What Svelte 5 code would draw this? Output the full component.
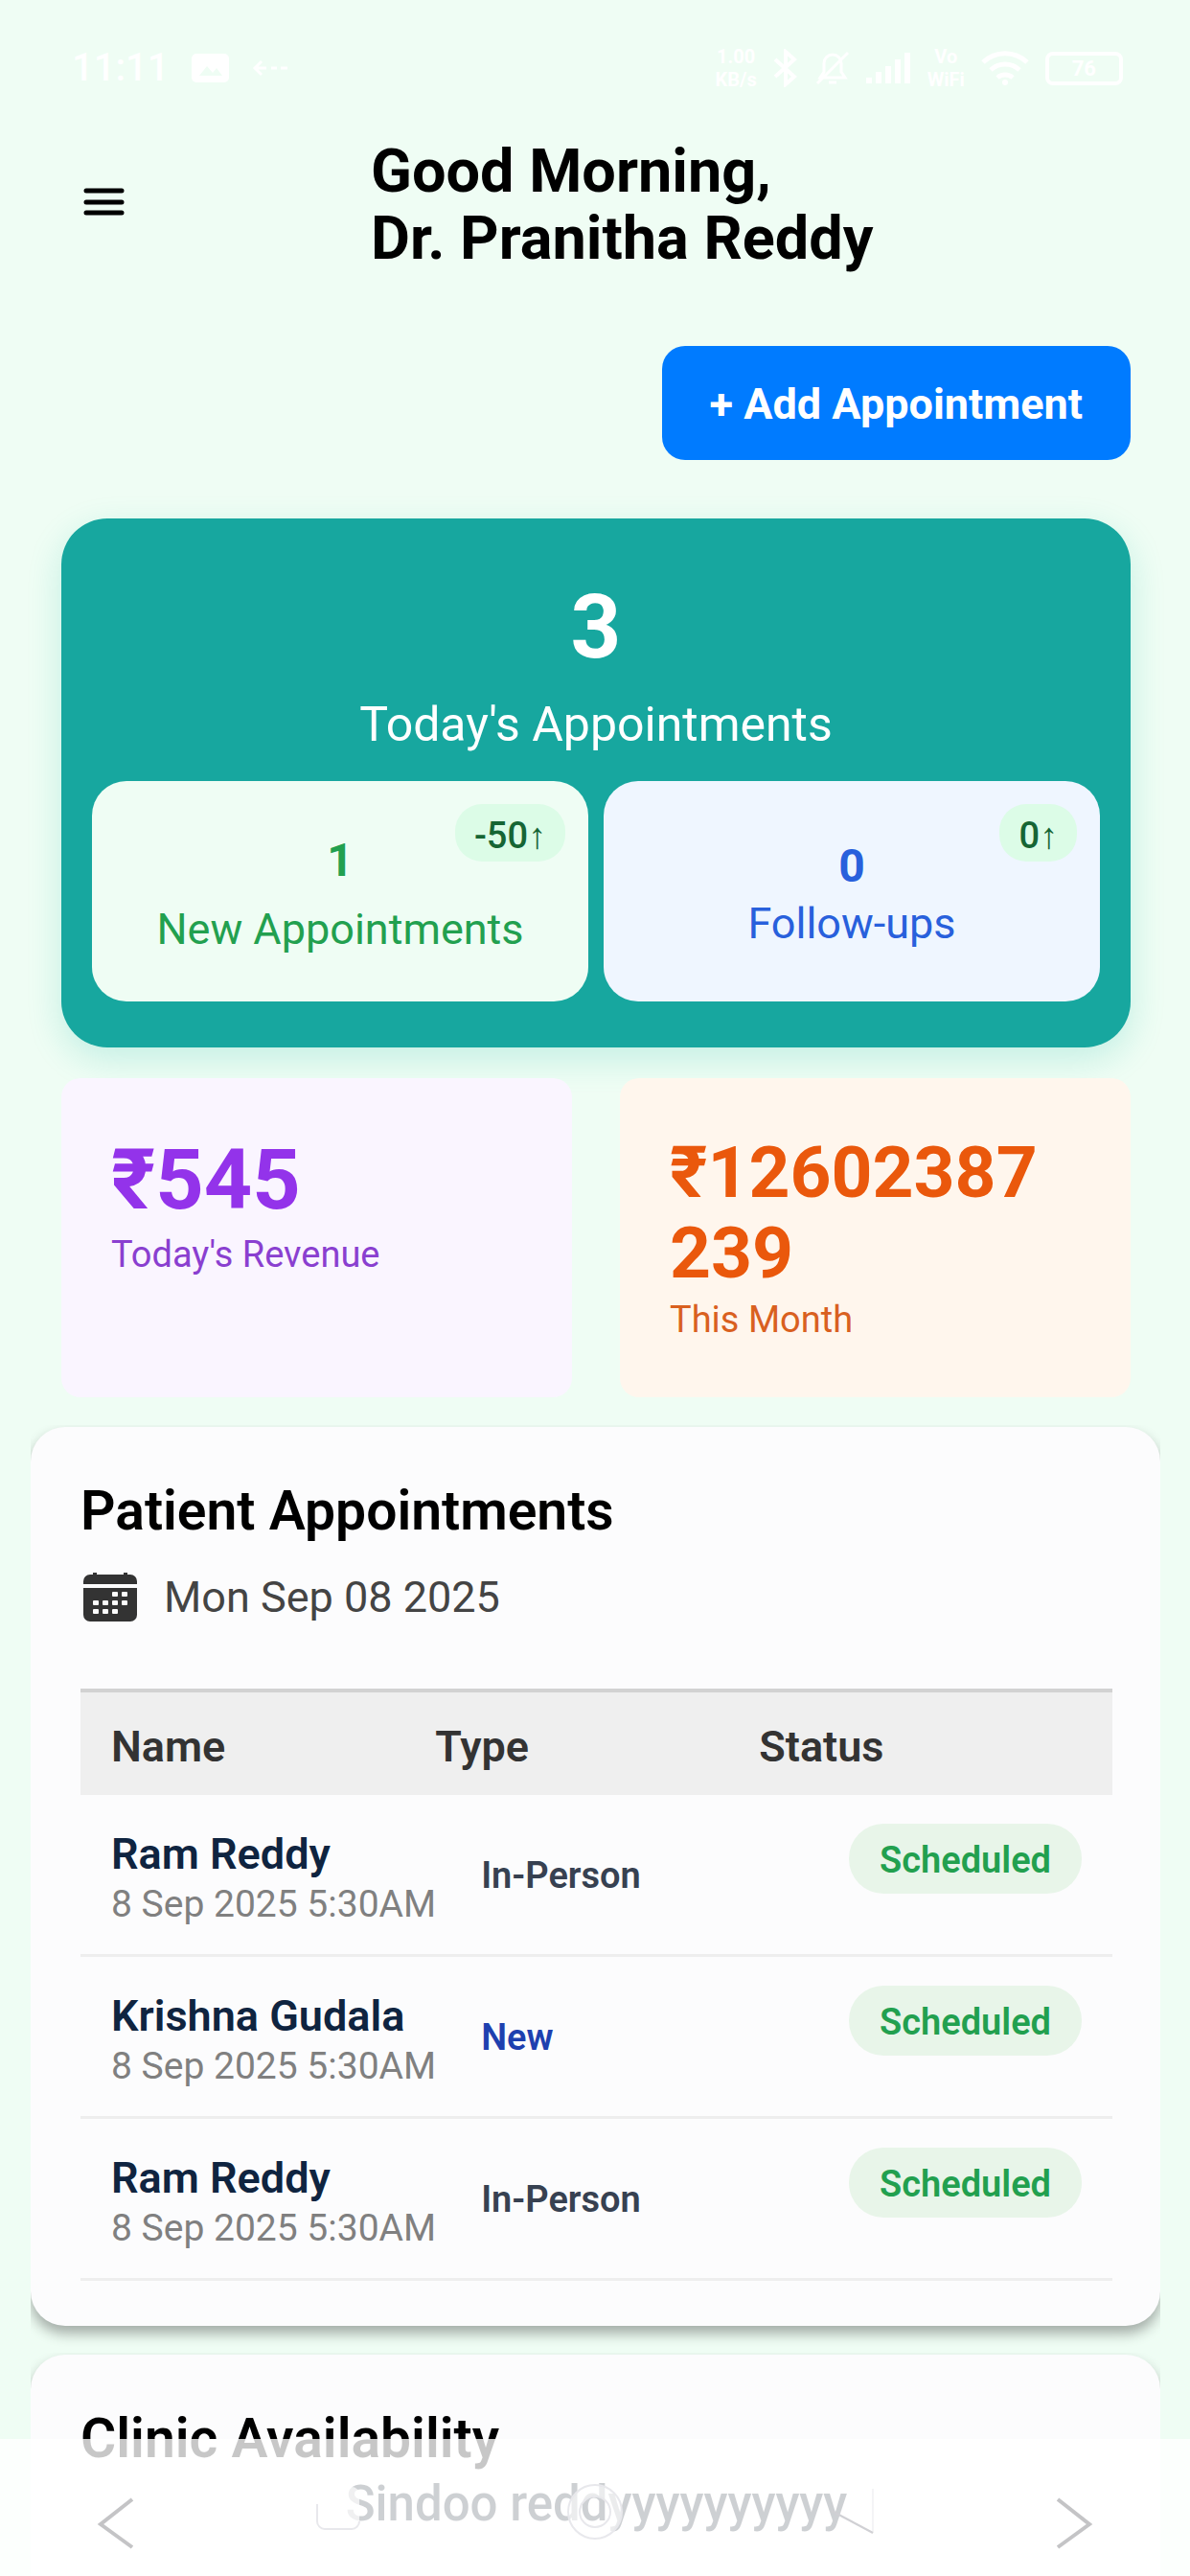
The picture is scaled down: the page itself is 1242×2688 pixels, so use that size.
<script lang="ts">
  type Appointment = {
    name: string;
    time: string;
    type: string;
    status: string;
  };

  const doctor = 'Dr. Pranitha Reddy';
  const today = 'Mon Sep 08 2025';

  const stats = [
    { id: 'new', value: 1, label: 'New Appointments', change: '-50' },
    { id: 'follow', value: 0, label: 'Follow-ups', change: '0' },
  ];

  const appointments: Appointment[] = [
    { name: 'Ram Reddy', time: '8 Sep 2025 5:30AM', type: 'In-Person', status: 'Scheduled' },
    { name: 'Krishna Gudala', time: '8 Sep 2025 5:30AM', type: 'New', status: 'Scheduled' },
    { name: 'Ram Reddy', time: '8 Sep 2025 5:30AM', type: 'In-Person', status: 'Scheduled' },
  ];

  const calendarDots = [
    [30, 20], [40, 20],
    [10, 29], [20, 29], [30, 29], [40, 29],
    [10, 38], [20, 38], [30, 38],
  ];
</script>

<div class="screen">
  <div class="status-bar">
    <div class="status-left">
      <span class="clock">11:11</span>
      <svg width="39" height="30" viewBox="0 0 39 30" aria-hidden="true">
        <rect width="39" height="30" rx="5" fill="#fff" />
        <path d="M8 23l8-10 6 7 4-5 6 8z" fill="#effdf4" />
      </svg>
      <svg width="40" height="18" viewBox="0 0 40 18" fill="none" stroke="#fff" stroke-width="3" aria-hidden="true">
        <path d="M10 2L3 9l7 7M3 9h12M20 9h6M30 9h7" />
      </svg>
    </div>
    <div class="status-right">
      <div class="tiny"><span>1.00</span><span>KB/s</span></div>
      <svg width="28" height="40" viewBox="0 0 28 40" fill="none" stroke="#fff" stroke-width="4" aria-hidden="true">
        <path d="M3 11l20 18-9 8V3l9 8L3 29" />
      </svg>
      <svg width="38" height="38" viewBox="0 0 38 38" fill="none" stroke="#fff" stroke-width="3" aria-hidden="true">
        <path d="M6 29h26l-4-6v-9a9 9 0 0 0-18 0v9zM15 34h8M3 35L35 3" />
      </svg>
      <svg width="48" height="32" viewBox="0 0 48 32" fill="#fff" aria-hidden="true">
        <path d="M0 26h6v6H0zM10 20h6v12h-6zM20 14h6v18h-6zM30 7h6v25h-6zM40 0h6v32h-6z" />
      </svg>
      <div class="tiny"><span>Vo</span><span>WiFi</span></div>
      <svg width="52" height="38" viewBox="0 0 52 38" fill="none" stroke="#fff" stroke-width="5" aria-hidden="true">
        <path d="M3 13a33 33 0 0 1 46 0M11 21a22 22 0 0 1 30 0M18 29a12 12 0 0 1 16 0" />
        <circle cx="26" cy="34" r="3" fill="#fff" stroke="none" />
      </svg>
      <span class="battery">76</span>
    </div>
  </div>

  <header>
    <button type="button" class="menu" aria-label="Open menu">
      <svg width="43" height="40" viewBox="0 0 43 40" aria-hidden="true">
        <path d="M3 5h37M3 17h37M3 28h37" stroke="#000" stroke-width="5" stroke-linecap="round" />
      </svg>
    </button>
    <h1>Good Morning,<br />{doctor}</h1>
  </header>

  <div class="actions">
    <button type="button" class="add">+ Add Appointment</button>
  </div>

  <section class="summary">
    <p class="total">3</p>
    <p class="total-label">Today's Appointments</p>
    <div class="stats">
      {#each stats as stat (stat.id)}
        <div class="stat {stat.id}">
          <span class="stat-value">{stat.value}</span>
          <span class="stat-label">{stat.label}</span>
          <span class="change">{stat.change}↑</span>
        </div>
      {/each}
    </div>
  </section>

  <section class="revenue">
    <div class="revenue-card day">
      <p class="amount">₹545</p>
      <p class="caption">Today's Revenue</p>
    </div>
    <div class="revenue-card month">
      <p class="amount">₹12602387239</p>
      <p class="caption">This Month</p>
    </div>
  </section>

  <section class="card">
    <h2>Patient Appointments</h2>
    <button type="button" class="date">
      <svg width="56" height="52" viewBox="0 0 56 52" fill="#333" aria-hidden="true">
        <path d="M0 12V9a7 7 0 0 1 7-7h3V0h4v2h28V0h4v2h3a7 7 0 0 1 7 7v3z" />
        <path d="M0 16h56v28a7 7 0 0 1-7 7H7a7 7 0 0 1-7-7z" />
        {#each calendarDots as [x, y]}
          <rect {x} {y} width="6" height="5" rx="1" fill="#fcfcfc" />
        {/each}
      </svg>
      {today}
    </button>

    <table>
      <thead>
        <tr>
          <th class="col-name">Name</th>
          <th class="col-type">Type</th>
          <th>Status</th>
        </tr>
      </thead>
      <tbody>
        {#each appointments as item}
          <tr>
            <td class="col-name">
              <div class="name">{item.name}</div>
              <div class="time">{item.time}</div>
            </td>
            <td class="type" class:is-new={item.type === 'New'}>{item.type}</td>
            <td class="status"><span class="pill">{item.status}</span></td>
          </tr>
        {/each}
      </tbody>
    </table>
  </section>

  <section class="card clinic">
    <h2>Clinic Availability</h2>
    <p class="clinic-name">Sindoo reddyyyyyyyyyy</p>
  </section>

  <nav aria-label="Page">
    <button type="button" aria-label="Previous">
      <svg width="40" height="54" viewBox="0 0 40 54" aria-hidden="true">
        <path d="M37 2L4 28l33 24" />
      </svg>
    </button>
    <div class="system-keys">
      <svg width="46" height="56" viewBox="0 0 46 56" aria-hidden="true">
        <rect x="1" y="2" width="44" height="44" rx="8" fill="#fff" fill-opacity="0.7" stroke="none" />
        <path d="M1 20v18a8 8 0 0 0 8 8h28a8 8 0 0 0 8-8" />
      </svg>
      <svg width="58" height="58" viewBox="0 0 58 58" aria-hidden="true">
        <circle cx="29" cy="29" r="22" class="ring" />
        <circle cx="29" cy="29" r="28" />
        <circle cx="29" cy="29" r="16" />
      </svg>
      <svg width="46" height="56" viewBox="0 0 46 56" aria-hidden="true">
        <path d="M45 4v46" class="faint" />
        <path d="M45 50L2 27" class="edge" />
      </svg>
    </div>
    <button type="button" aria-label="Next">
      <svg width="40" height="54" viewBox="0 0 40 54" aria-hidden="true">
        <path d="M3 2l33 26L3 52" />
      </svg>
    </button>
  </nav>
</div>

<style>
  :global(body) {
    background: #effdf4;
  }

  .screen {
    min-height: 100vh;
    box-sizing: border-box;
    display: flex;
    flex-direction: column;
    background: #effdf4;
    font-family: Roboto, 'Liberation Sans', sans-serif;
    color: #000;
  }

  h1,
  h2,
  p {
    margin: 0;
  }

  button {
    border: 0;
    padding: 0;
    background: none;
    font-family: inherit;
    color: inherit;
  }

  .status-bar {
    box-sizing: border-box;
    display: flex;
    justify-content: space-between;
    align-items: center;
    height: 116px;
    padding: 26px 70px 0 75px;
    color: #fff;
  }

  .status-left,
  .status-right {
    display: flex;
    align-items: center;
    gap: 16px;
  }

  .status-left {
    gap: 24px;
  }

  .clock {
    font-size: 40px;
    font-weight: 500;
    line-height: 48px;
  }

  .tiny {
    display: flex;
    flex-direction: column;
    font-size: 20px;
    font-weight: 700;
    line-height: 24px;
    text-align: center;
  }

  .battery {
    border: 4px solid #fff;
    border-radius: 8px;
    padding: 0 24px;
    font-size: 22px;
    font-weight: 700;
    line-height: 27px;
  }

  header {
    display: flex;
    align-items: center;
    gap: 257px;
    padding: 28px 87px 0;
  }

  .menu svg {
    display: block;
  }

  h1 {
    font-size: 63px;
    font-weight: 700;
    line-height: 70px;
    white-space: nowrap;
  }

  .actions {
    display: flex;
    justify-content: flex-end;
    padding: 77px 62px 0;
  }

  .add {
    padding: 36px 50px 33px;
    border-radius: 24px;
    background: #007bff;
    color: #fff;
    font-size: 45px;
    font-weight: 700;
    line-height: 50px;
  }

  .summary {
    margin: 61px 62px 0 64px;
    padding: 60px 32px 48px;
    border-radius: 48px;
    background: #17a79f;
    box-shadow: 0 12px 36px rgba(20, 184, 166, 0.2);
    color: #fff;
    text-align: center;
  }

  .total {
    font-size: 92px;
    font-weight: 700;
    line-height: 108px;
  }

  .total-label {
    margin-top: 18px;
    font-size: 50px;
    line-height: 58px;
  }

  .stats {
    display: flex;
    gap: 16px;
    margin-top: 30px;
  }

  .stat {
    position: relative;
    flex: 1;
    display: flex;
    flex-direction: column;
    justify-content: center;
    gap: 20px;
    padding: 55px 16px 50px;
    border-radius: 36px;
  }

  .stat.new {
    background: #effdf4;
    color: #22a04f;
  }

  .stat.follow {
    gap: 8px;
    background: #eff6ff;
    color: #2860dc;
  }

  .stat-value {
    font-size: 48px;
    font-weight: 700;
    line-height: 55px;
  }

  .stat-label {
    font-size: 45px;
    line-height: 50px;
  }

  .change {
    position: absolute;
    top: 24px;
    right: 24px;
    padding: 13px 20px 7px;
    border-radius: 28px;
    background: #dcfce7;
    color: #166534;
    font-size: 38px;
    font-weight: 500;
    line-height: 40px;
  }

  .revenue {
    display: flex;
    gap: 50px;
    margin: 32px 62px 0 64px;
    position: relative;
  }

  .revenue-card {
    flex: 1;
    min-width: 0;
    box-sizing: border-box;
    padding: 56px 72px 60px 52px;
    border-radius: 20px;
  }

  .revenue-card.day {
    background: #faf5ff;
    color: #9333ea;
  }

  .revenue-card.month {
    background: #fff6ed;
    color: #ea580c;
  }

  .amount {
    font-weight: 700;
    overflow-wrap: anywhere;
  }

  .day .amount {
    font-size: 88px;
    line-height: 100px;
  }

  .month .amount {
    font-size: 75px;
    line-height: 84px;
  }

  .caption {
    margin-top: 7px;
    font-size: 38px;
    line-height: 42px;
  }

  .day .caption {
    color: #8a3fd0;
  }

  .month .caption {
    color: #d9601f;
  }

  .card {
    margin: 31px 31px 0 32px;
    padding: 56px 50px 47px 52px;
    border-radius: 36px;
    background: #fcfcfd;
    box-shadow: 0 8px 14px rgba(0, 0, 0, 0.32);
    /* the shadow only falls below the card, never beside it */
    clip-path: inset(-2px 0 -28px);
  }

  h2 {
    font-size: 57px;
    font-weight: 600;
    line-height: 63px;
  }

  .date {
    display: flex;
    align-items: center;
    gap: 28px;
    margin: 33px 0 69px 3px;
    font-size: 45px;
    line-height: 52px;
    color: #444;
  }

  table {
    width: 100%;
    table-layout: fixed;
    border-collapse: separate;
    border-spacing: 0;
  }

  th {
    padding: 32px 0 26px;
    border-top: 4px solid #d2d2d2;
    background: #efefef;
    color: #333;
    font-size: 45px;
    font-weight: 600;
    line-height: 49px;
    text-align: left;
  }

  td {
    padding: 0;
    border-bottom: 3px solid #eee;
  }

  th.col-name,
  th.col-type {
    width: 31.4%;
  }

  .col-name {
    padding-left: 32px;
  }

  td.col-name {
    padding-top: 37px;
    padding-bottom: 31px;
    white-space: nowrap;
  }

  .name {
    margin-bottom: 7px;
    color: #0f2440;
    font-size: 45px;
    font-weight: 600;
    line-height: 49px;
  }

  .time {
    color: #808080;
    font-size: 39px;
    line-height: 42px;
  }

  .type {
    padding-top: 2px;
    padding-left: 48px;
    color: #374151;
    font-size: 38px;
    font-weight: 600;
    line-height: 42px;
  }

  .type.is-new {
    color: #1e40af;
  }

  .status {
    padding: 30px 32px 0 0;
    text-align: right;
    vertical-align: top;
  }

  .pill {
    display: inline-block;
    padding: 17px 32px 14px;
    border-radius: 36px;
    background: #e8f5e9;
    color: #22a04f;
    font-size: 38px;
    font-weight: 600;
    line-height: 42px;
  }

  .clinic {
    flex: 1;
    margin-top: 30px;
    margin-bottom: 0;
    border-radius: 36px 36px 0 0;
  }

  .clinic-name {
    margin-top: 10px;
    color: #1f2937;
    font-size: 51px;
    font-weight: 500;
    line-height: 54px;
    text-align: center;
  }

  nav {
    position: fixed;
    inset: auto 0 0;
    display: flex;
    align-items: center;
    justify-content: space-between;
    padding: 61px 101px 28px;
    background: rgba(255, 255, 255, 0.78);
  }

  nav svg {
    display: block;
    fill: none;
    stroke: #c4c4c6;
    stroke-width: 4;
  }

  .system-keys {
    display: flex;
    align-items: center;
    justify-content: space-between;
    width: 56%;
    margin-top: -24px;
  }

  .system-keys svg {
    stroke: #e8e8ec;
    stroke-width: 2;
  }

  .ring {
    stroke: #fff;
    stroke-opacity: 0.6;
    stroke-width: 11;
  }

  .edge {
    stroke: #d0d0d4;
  }

  .faint {
    stroke: #f4f4f6;
  }
</style>
